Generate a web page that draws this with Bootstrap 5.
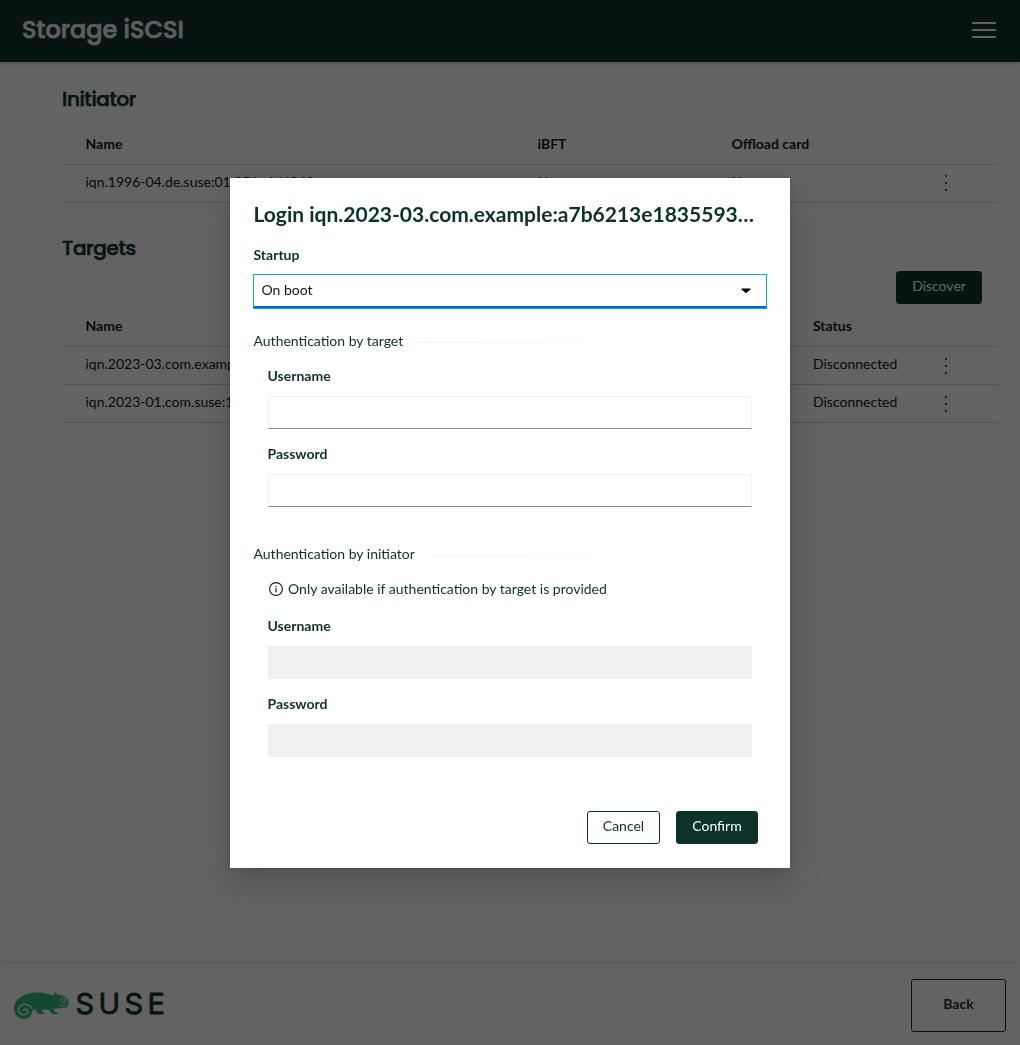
<!DOCTYPE html>
<html lang="en">
<head>
<meta charset="utf-8">
<meta name="viewport" content="width=device-width, initial-scale=1">
<title>Storage iSCSI</title>
<link href="https://cdn.jsdelivr.net/npm/bootstrap@5.3.0/dist/css/bootstrap.min.css" rel="stylesheet">
<style>
:root{--pine:#0c322c}
html,body{height:100%}
body{font-family:Lato,"Noto Sans",sans-serif;font-size:14px;line-height:21px;color:#151515;background:#fff;overflow:hidden}
.app-header{height:62px;background:var(--pine);box-shadow:0 1px 4px rgba(0,0,0,.25);padding:0 24px 0 22px}
.app-title,.section-title{font-family:Poppins,Inter,sans-serif;font-weight:500;margin:0}
.app-title{font-size:24px;line-height:36px;color:#efefef;letter-spacing:0;padding-bottom:3px;-webkit-text-stroke:.7px #efefef}
.section-title{font-size:20px;line-height:30px;color:var(--pine);letter-spacing:-.4px;-webkit-text-stroke:.6px var(--pine)}
.app-main{padding:22px 22px 0 62px}
.sheet{width:936px}
.grid-table{--bs-table-color:#151515;--bs-table-bg:transparent;table-layout:fixed;margin:0;border-color:#d2d2d2}
.grid-table th,.grid-table td{padding:6px 0 10px 23.5px;height:38px;white-space:nowrap;overflow:hidden}
.grid-table td:last-child{padding:9px 0 0 16px}
.initiator-table td:last-child{padding-top:8px}
.grid-table svg{display:block}
.btn-suse{--bs-btn-font-size:14px;--bs-btn-line-height:21px;--bs-btn-padding-x:0;--bs-btn-border-radius:3px;--bs-btn-border-color:var(--pine);--bs-btn-color:var(--pine);--bs-btn-bg:#fff;height:33px;padding-top:3px;padding-bottom:6px}
.btn-solid{--bs-btn-color:#fff;--bs-btn-bg:var(--pine)}
.btn-back{--bs-btn-font-weight:700;width:95px;height:53px;padding-bottom:8px}
.w-cancel,.w-confirm{padding-top:2px;padding-bottom:7px}
.w-cancel{width:73px}.w-confirm{width:82px}.w-discover{width:86px}
.targets-head{margin-top:30px}
.targets-table{margin-top:5px}
.app-footer{height:82px;padding:16px 14px 13px 13px;box-shadow:0 -1px 2px rgba(0,0,0,.12)}
.shade{background:rgba(3,3,3,.62)}
.login-box{width:560px;height:690px;margin-top:178px;padding:23px 24px 24px 23.5px;color:var(--pine);background:#fff;box-shadow:0 16px 32px rgba(3,3,3,.16),0 0 8px rgba(3,3,3,.1)}
.login-title{font-size:21px;line-height:26px;font-weight:700;margin:0 0 17px}
.field-label{display:block;font-weight:700;line-height:21px;margin:14px 0 10px -.5px}
.startup-label{margin:0 0 9px}
.pf-select,.pf-input{border-radius:0;font-size:14px;line-height:21px;color:#151515;height:33px}
.pf-select{width:514px;height:35px;margin:0 0 21px -.5px;padding:3px 15.5px 7px 7.5px;border:1px solid #00b2e2;box-shadow:inset 0 -2px #0066cc}
.pf-select svg{margin-top:3px}
.pf-input{padding:4px 8px;border:1px solid #f0f0f0;border-bottom-color:#8a8d90}
.pf-input:disabled{background:#f0f0f0;border-color:#f0f0f0}
.fade-rule{flex:1;height:1px;margin:3px 40px 0 14px;background:linear-gradient(90deg,#f2f2f2,#fff 80%)}
.group-second{margin-top:36px}
.group-body{padding:0 14px 0 14.5px}
.hint{margin-top:14px}
.label-after-hint{margin-top:16px}
</style>
</head>
<body>
<div class="vh-100 d-flex flex-column">
  <header class="app-header d-flex align-items-center justify-content-between">
    <h1 class="app-title">Storage iSCSI</h1>
    <svg width="24" height="18" viewBox="0 0 24 18" fill="#fff"><path d="M0 0h24v2H0zM0 7h24v2H0zM0 14h24v2H0z"/></svg>
  </header>
  <main class="app-main flex-grow-1">
    <h2 class="section-title">Initiator</h2>
    <div class="sheet mt-2 pt-1">
      <table class="table grid-table initiator-table">
        <colgroup><col style="width:452px"><col style="width:194px"><col style="width:218px"><col></colgroup>
        <thead><tr><th>Name</th><th>iBFT</th><th>Offload card</th><th></th></tr></thead>
        <tbody><tr><td>iqn.1996-04.de.suse:01:351e6d6249</td><td>No</td><td>None</td><td><svg width="8" height="18" fill="#4f5255"><path d="M3 2h2v2H3zM3 9h2v2H3zM3 16h2v2H3z"/></svg></td></tr></tbody>
      </table>
    </div>
    <h2 class="section-title targets-head">Targets</h2>
    <div class="sheet d-flex justify-content-end mt-2 pe-3"><button class="btn btn-suse btn-solid w-discover">Discover</button></div>
    <div class="sheet targets-table">
      <table class="table grid-table">
        <colgroup><col style="width:727.5px"><col style="width:136.5px"><col></colgroup>
        <thead><tr><th>Name</th><th>Status</th><th></th></tr></thead>
        <tbody>
          <tr><td>iqn.2023-03.com.example:12ac</td><td>Disconnected</td><td><svg width="8" height="18" fill="#4f5255"><path d="M3 2h2v2H3zM3 9h2v2H3zM3 16h2v2H3z"/></svg></td></tr>
          <tr><td>iqn.2023-01.com.suse:12ac78</td><td>Disconnected</td><td><svg width="8" height="18" fill="#4f5255"><path d="M3 2h2v2H3zM3 9h2v2H3zM3 16h2v2H3z"/></svg></td></tr>
        </tbody>
      </table>
    </div>
  </main>
  <footer class="app-footer d-flex align-items-center justify-content-between">
    <svg width="170" height="36" viewBox="0 -2 170 36">
      <path fill="#30ba78" d="M1 17C2 9 10 3 23 2.500c7-.4 12 1.200 18 3L41.500 2.200 45 4.800C49 5 54 7 55 10c1 3 .3 5.500-.7 7C51 18.500 46 18 42 18.500c-1.500.5-1 2.500 0 3.500h2.500v2H40c-2-1-3-3.500-5-4.200-2-.5-5-.3-6 .7-.8 1 .5 1.500 2 1.500v2h-5c-2-1-2.500-3-4-4.500-1 0-2 .3-2.500.3C19.500 25 16 29 11 29 5 29 .5 24 1 17z"/>
      <path fill="none" stroke="#fff" stroke-width="1.300" stroke-linecap="round" d="M18.800 18.300C16 13.500 9 13 6.500 16.800c-2.500 4 .2 8 4.300 8 3.500 0 5-2.800 3.700-4.800-1.300-1.800-3.800-1.100-3.800.5"/>
      <circle cx="50.300" cy="10.300" r="2.700" fill="none" stroke="#fff" stroke-width=".8"/><circle cx="51.200" cy="10" r=".8" fill="#fff"/>
      <path fill="none" stroke="#fff" stroke-width=".8" d="M46 15c3 1.300 6 .8 8.500-.7"/>
      <text x="62.500" y="23.800" font-family="Inter, sans-serif" font-size="29" font-weight="400" fill="#0c322c" stroke="#0c322c" stroke-width=".8" stroke-linejoin="round" letter-spacing="4.400">SUSE</text>
    </svg>
    <button class="btn btn-suse btn-back">Back</button>
  </footer>
</div>
<div class="shade position-fixed top-0 start-0 w-100 h-100 d-flex justify-content-center align-items-start">
  <div class="login-box d-flex flex-column" role="dialog">
    <h2 class="login-title text-nowrap">Login iqn.2023-03.com.example:a7b6213e1835593…</h2>
    <label class="field-label startup-label" for="startup">Startup</label>
    <div class="pf-select d-flex align-items-center justify-content-between" id="startup">On boot
      <svg width="10" height="6" viewBox="0 0 10 6"><path d="M.8.5h8.400q.8 0 .3.700L5.600 4.700q-.6.500-1.200 0L.5 1.200Q0 .5.8.5z"/></svg>
    </div>
    <div class="d-flex align-items-center"><div>Authentication by target</div><span class="fade-rule"></span></div>
    <div class="group-body">
      <label class="field-label" for="tu">Username</label><input class="form-control pf-input" id="tu">
      <label class="field-label" for="tp">Password</label><input class="form-control pf-input" type="password" id="tp">
    </div>
    <div class="d-flex align-items-center group-second"><div>Authentication by initiator</div><span class="fade-rule ms-3"></span></div>
    <div class="group-body">
      <div class="d-flex align-items-center gap-1 hint"><svg width="16" height="16" viewBox="0 0 16 16"><circle cx="8" cy="8" r="6.400" fill="none" stroke="#151515" stroke-width="1.100"/><path fill="#151515" d="M7.400 7h1.200v4.300H7.400zM7.400 4.700h1.200v1.200H7.400z"/></svg><span>Only available if authentication by target is provided</span></div>
      <label class="field-label label-after-hint" for="iu">Username</label><input class="form-control pf-input" id="iu" disabled>
      <label class="field-label" for="ip">Password</label><input class="form-control pf-input" type="password" id="ip" disabled>
    </div>
    <div class="d-flex justify-content-end gap-3 mt-auto pe-2"><button class="btn btn-suse w-cancel">Cancel</button><button class="btn btn-suse btn-solid w-confirm">Confirm</button></div>
  </div>
</div>
<script src="https://cdn.jsdelivr.net/npm/bootstrap@5.3.0/dist/js/bootstrap.bundle.min.js"></script>
</body>
</html>
